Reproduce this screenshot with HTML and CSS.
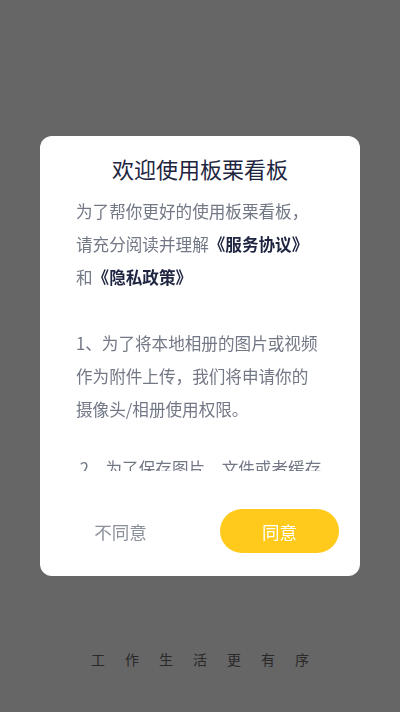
FILE: index.html
```html
<!DOCTYPE html>
<html lang="zh-CN">
<head>
<meta charset="utf-8">
<link rel="stylesheet" href="styles.css">
</head>
<body>
<div class="page">
  <div class="slogan">工作生活更有序</div>
</div>
<div class="mask">
  <div class="dialog">
    <div class="title">欢迎使用板栗看板</div>
    <div class="content">
      <p class="para">为了帮你更好的使用板栗看板，<br>请充分阅读并理解<b>《服务协议》</b><br>和<b>《隐私政策》</b></p>
      <p class="para">1、为了将本地相册的图片或视频<br>作为附件上传，我们将申请你的<br>摄像头/相册使用权限。</p>
      <p class="para para-last">&nbsp;2、为了保存图片、文件或者缓存<br>数据，我们将申请你的存储权限。</p>
    </div>
    <div class="footer">
      <button class="btn btn-cancel">不同意</button>
      <button class="btn btn-ok">同意</button>
    </div>
  </div>
</div>
</body>
</html>
```
FILE: styles.css
```css
* { box-sizing: border-box; }
html, body {
  margin: 0;
  padding: 0;
  width: 400px;
  height: 712px;
  overflow: hidden;
  font-family: "Noto Sans CJK SC", "Noto Sans", sans-serif;
}
.page {
  width: 400px;
  height: 712px;
  background: #ffffff;
  display: flex;
  flex-direction: column;
  justify-content: flex-end;
  align-items: center;
  padding-bottom: 43px;
}
.slogan {
  font-size: 14px;
  line-height: 20px;
  letter-spacing: 20px;
  margin-right: -20px;
  color: #666666;
}
.mask {
  position: fixed;
  inset: 0;
  background: rgba(0, 0, 0, 0.6);
  display: flex;
  align-items: center;
  justify-content: center;
}
.dialog {
  width: 320px;
  height: 440px;
  background: #ffffff;
  border-radius: 12px;
  padding-top: 17px;
  display: flex;
  flex-direction: column;
}
.title {
  font-size: 22px;
  line-height: 30px;
  text-align: center;
  color: #1e2541;
  margin-bottom: 12px;
}
.content {
  height: 276px;
  overflow: hidden;
  padding-left: 36px;
  font-size: 16.6px;
  line-height: 33px;
  color: #737886;
  white-space: nowrap;
}
.para { margin: 0 0 33px; }
.para-last { margin-top: -7px; }
.para b { color: #1e2541; font-weight: 700; }
.footer {
  margin-top: 38px;
  padding: 0 21px;
  display: flex;
  justify-content: space-between;
}
.btn {
  width: 119px;
  height: 44px;
  border: none;
  border-radius: 22px;
  font-family: "Noto Sans CJK SC", "Noto Sans", sans-serif;
  font-size: 17.5px;
  padding: 0;
}
.btn-cancel { background: transparent; color: #8b909b; }
.btn-ok { background: #ffca1c; color: #ffffff; }
```
